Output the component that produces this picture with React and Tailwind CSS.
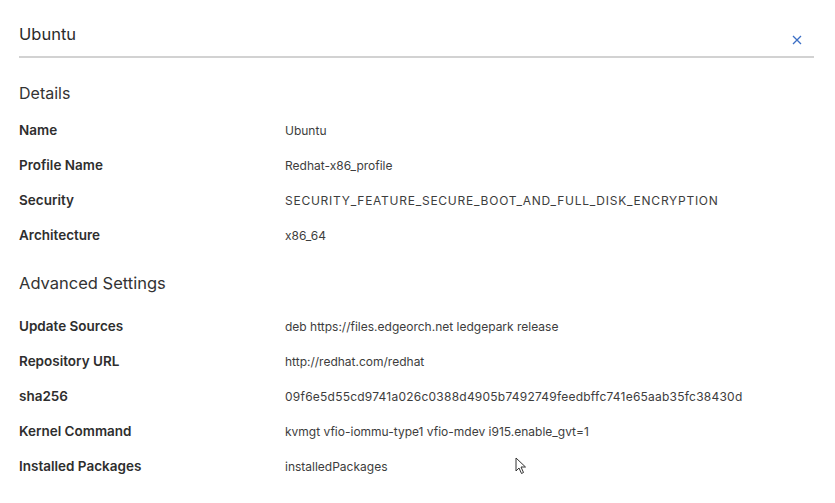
import React from "react";

const details = [
  { label: "Name", value: "Ubuntu" },
  { label: "Profile Name", value: "Redhat-x86_profile" },
  { label: "Security", value: "SECURITY_FEATURE_SECURE_BOOT_AND_FULL_DISK_ENCRYPTION", wide: "tracking-[0.75px]" },
  { label: "Architecture", value: "x86_64" },
];

const advanced = [
  { label: "Update Sources", value: "deb https://files.edgeorch.net ledgepark release" },
  { label: "Repository URL", value: "http://redhat.com/redhat" },
  { label: "sha256", value: "09f6e5d55cd9741a026c0388d4905b7492749feedbffc741e65aab35fc38430d", wide: "tracking-[0.23px]" },
  { label: "Kernel Command", value: "kvmgt vfio-iommu-type1 vfio-mdev i915.enable_gvt=1" },
  { label: "Installed Packages", value: "installedPackages" },
];

const Row = ({ label, value, wide = "" }) => (
  <div className="flex h-[35px] items-center">
    <div className="w-[266px] text-[13.5px] font-semibold text-[#2e2e2e]">{label}</div>
    <div className={`text-[12px] text-[#3d3d3d] ${wide}`}>{value}</div>
  </div>
);

const App = () => {
  return (
    <div
      className="relative w-[835px] h-[503px] overflow-hidden bg-white pl-[19px] pr-[21px]"
      style={{ fontFamily: "Inter, 'Open Sans', sans-serif" }}
    >
      {/* drawer header */}
      <div className="flex h-[58px] items-start justify-between border-b-2 border-[#d2d2d2]">
        <div className="pt-[22px] text-[16.5px] text-[#2b2b2b]">Ubuntu</div>
        <button className="mt-[35px] mr-[12px] text-[#3b6fc5]">
          <svg width="10" height="10" viewBox="0 0 10 10" fill="none" stroke="currentColor" strokeWidth="1.3">
            <path d="M1 1 L9 9 M9 1 L1 9" />
          </svg>
        </button>
      </div>

      <div className="mt-[15px] flex h-[40px] items-center text-[16px] text-[#333]">Details</div>
      {details.map((d) => (
        <Row key={d.label} {...d} />
      ))}

      <div className="flex h-[56px] items-center pt-[4px] text-[16.5px] text-[#333]">Advanced Settings</div>
      {advanced.map((d) => (
        <Row key={d.label} {...d} />
      ))}

      {/* mouse pointer */}
      <svg className="absolute left-[515px] top-[457px]" width="12" height="18" viewBox="0 0 12 18">
        <path d="M1 1 L1 14 L4 11 L6.5 16.5 L8.5 15.5 L6 10 L10.5 10 Z" fill="white" stroke="#333" strokeWidth="1" strokeLinejoin="round" />
      </svg>
    </div>
  );
};

export default App;
